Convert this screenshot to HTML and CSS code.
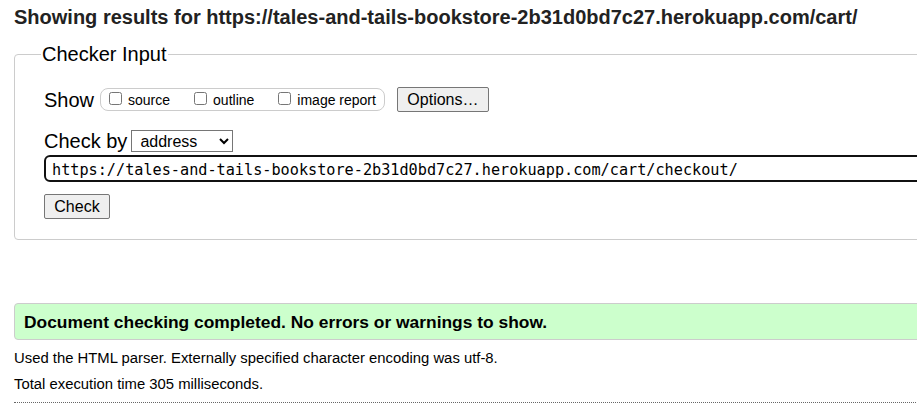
FILE: index.html
```html
<!DOCTYPE html>
<html lang="en">
<head>
<meta charset="utf-8">
<title>Nu Html Checker</title>
<link rel="stylesheet" href="styles.css">
</head>
<body>
<div class="page">
  <h2 class="title">Showing results for https://tales-and-tails-bookstore-2b31d0bd7c27.herokuapp.com/cart/</h2>
  <form class="form">
    <fieldset class="checker">
      <legend class="legend">Checker Input</legend>
      <div class="row show-row">
        <span class="lbl">Show</span>
        <fieldset class="opts">
          <label class="opt"><input type="checkbox" class="cb"> source</label>
          <label class="opt"><input type="checkbox" class="cb"> outline</label>
          <label class="opt"><input type="checkbox" class="cb"> image report</label>
        </fieldset>
        <button type="button" class="btn btn-options">Options…</button>
      </div>
      <div class="row by-row">
        <label class="lbl">Check by</label>
        <select class="sel"><option>address</option></select>
      </div>
      <div class="row url-row">
        <input class="url" type="text" value="https://tales-and-tails-bookstore-2b31d0bd7c27.herokuapp.com/cart/checkout/">
      </div>
      <div class="row submit-row">
        <button type="button" class="btn btn-check">Check</button>
      </div>
    </fieldset>
  </form>
  <p class="success">Document checking completed. No errors or warnings to show.</p>
  <p class="info">Used the HTML parser. Externally specified character encoding was utf-8.</p>
  <p class="info">Total execution time 305 milliseconds.</p>
  <hr class="sep">
</div>
</body>
</html>
```
FILE: styles.css
```css
html {
  overflow: hidden;
}
body {
  margin: 0;
  font-family: "Liberation Sans", Arial, sans-serif;
  color: #000;
  background: #fff;
}
.page {
  width: 1150px;
  padding: 0 0 0 14px;
}
.title {
  margin: 0;
  padding-top: 6px;
  font-size: 20px;
  line-height: 22px;
  font-weight: bold;
  color: #222;
}
.form {
  margin-top: 15px;
}
.checker {
  margin: 0;
  border: 1px solid #ccc;
  border-radius: 4px;
  padding: 10px 30px 20px 29px;
}
.legend {
  font-size: 20px;
  line-height: 22px;
  margin-left: -3px;
  padding: 0 1px;
}
.row {
  display: flex;
  align-items: center;
}
.lbl {
  font-size: 20px;
  line-height: 22px;
}
.show-row {
  margin-top: 12px;
}
.opts {
  margin: 0 0 0 6px;
  padding: 0 8px 0 8px;
  border: 1px solid #ccc;
  border-radius: 8px;
  display: flex;
  align-items: center;
  height: 23px;
  box-sizing: border-box;
}
.opt {
  font-size: 14px;
  display: flex;
  align-items: center;
  margin-right: 24px;
}
.opt:last-child {
  margin-right: 0;
}
.cb {
  margin: 0 6px 3px 0;
  width: 13px;
  height: 13px;
}
.btn {
  font-family: "Liberation Sans", Arial, sans-serif;
  font-size: 16px;
  background: #efefef;
  border: 1px solid #767676;
  border-radius: 2px;
  color: #000;
  padding: 1px 6px;
  box-sizing: border-box;
}
.btn-options {
  margin-left: 12px;
  width: 92px;
  height: 25px;
}
.by-row {
  margin-top: 18px;
}
.sel {
  margin-left: 4px;
  font-family: "Liberation Sans", Arial, sans-serif;
  font-size: 16px;
  width: 102px;
  height: 22px;
  border: 1px solid #767676;
  border-radius: 0;
  background: #fff;
  color: #000;
  padding: 0 0 0 4px;
}
.url-row {
  margin-top: 3px;
}
.url {
  width: 1100px;
  height: 27px;
  box-sizing: border-box;
  border: 2px solid #111;
  border-radius: 6px;
  font-family: "DejaVu Sans Mono", monospace;
  font-size: 15.2px;
  padding: 2px 0 0 6px;
  outline: none;
  color: #000;
}
.submit-row {
  margin-top: 12px;
}
.btn-check {
  width: 66px;
  height: 25px;
}
.success {
  margin: 63px 0 0;
  background: #ccffcc;
  border: 1px solid #ccc;
  border-radius: 4px;
  padding: 9px 9px 8px;
  font-size: 17.4px;
  font-weight: bold;
  line-height: 18px;
}
.info {
  font-size: 14.85px;
  margin: 10px 0 0;
  line-height: 16px;
}
.info + .info {
  margin-top: 10px;
}
.sep {
  margin: 10px 0 0;
  border: 0;
  border-top: 1px dotted #666;
  height: 0;
}
```
